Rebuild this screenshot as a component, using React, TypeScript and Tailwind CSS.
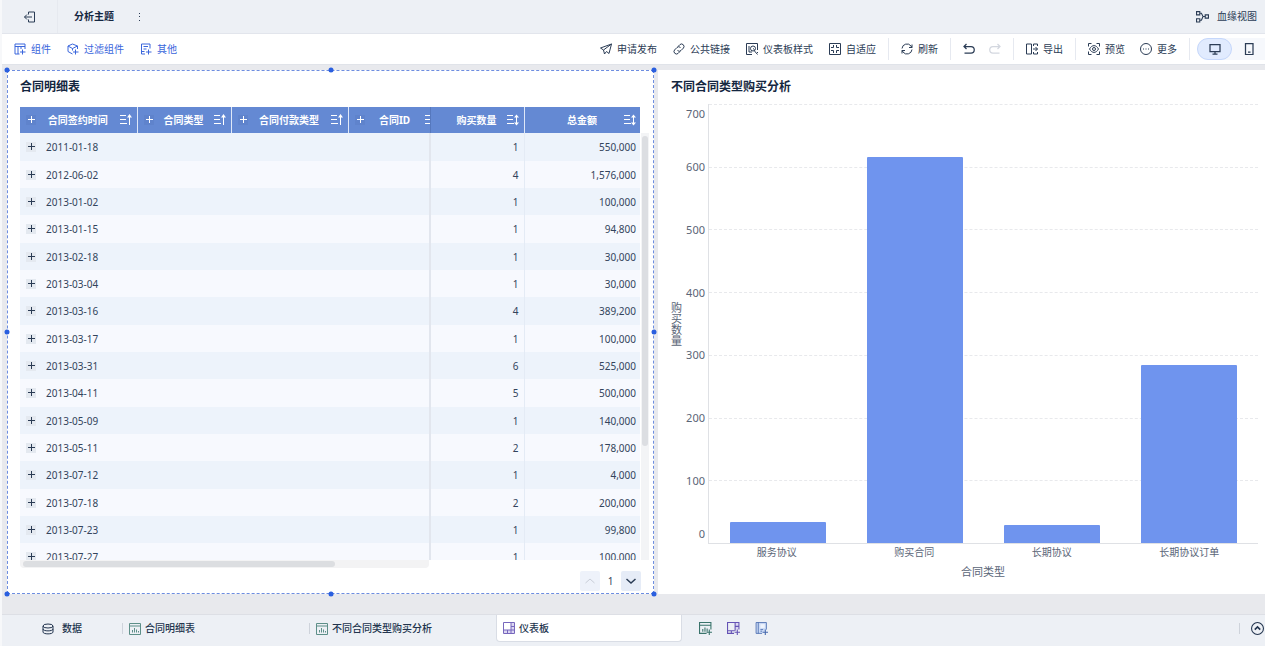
import React from 'react';
import clsx from 'clsx';

interface IconProps {
	children: React.ReactNode;
	size?: string;
}

const Icon: React.FC<IconProps> = ({ children, size = 'w-3 h-3' }) => (
	<svg
		viewBox="0 0 24 24"
		fill="none"
		stroke="currentColor"
		strokeWidth="2"
		className={clsx('shrink-0', size)}
		aria-hidden="true"
	>
		{children}
	</svg>
);

const icons = {
	exit: (
		<>
			<path d="M9 7V2h12v20H9v-5" />
			<path d="M16 12H1M6 7l-5 5 5 5" />
		</>
	),
	component: (
		<>
			<path d="M11 22H2V2h20v10M2 7h20M8 7v15M14 7v5" />
			<path d="M12 18h11M17 13v10" />
		</>
	),
	filter: (
		<>
			<path d="M11 22L2 17V6l9-4 10 4v6M2 6l9 5 10-5M11 11v4" />
			<path d="M12 18h11M17 13v10" />
		</>
	),
	other: (
		<>
			<path d="M10 22H3V2h17v9M7 7h9M7 12h6M3 17h6" />
			<path d="M12 18h11M17 13v10" />
		</>
	),
	publish: <path d="M23 2L1 10l6 4 2 8 4-5 5 4zM23 2L7 14" />,
	link: (
		<>
			<path d="M10 7l4-4a5 5 0 0 1 7 7l-5 5a5 5 0 0 1-7 0" />
			<path d="M14 17l-4 4a5 5 0 0 1-7-7l5-5a5 5 0 0 1 7 0" />
		</>
	),
	style: (
		<>
			<path d="M12 23H1V1h22v13M6 6v12M6 18h6" />
			<circle cx="14" cy="11" r="5" />
			<path d="M14 11l3 2M17 16l6 7M23 18v2" />
		</>
	),
	fit: (
		<>
			<path d="M1 1h22v22H1z" />
			<path d="M9 4v5H4M15 4v5h5M9 20v-5H4M15 20v-5h5" />
		</>
	),
	refresh: (
		<>
			<path d="M2 11a10 10 0 0 1 18-5l2 3M22 3v6h-6" />
			<path d="M22 13a10 10 0 0 1-18 5l-2-3M2 21v-6h6" />
		</>
	),
	undo: <path strokeWidth="2.5" d="M7 2L2 7l5 5M2 7h14a6 6 0 0 1 0 13H3" />,
	redo: <path strokeWidth="2.5" d="M17 2l5 5-5 5M22 7H8a6 6 0 0 0 0 13h13" />,
	export: (
		<>
			<path d="M1 2h10v20H1zM15 6V2h8v4M15 18v4h8v-4" />
			<path d="M14 12h9M19 8l4 4-4 4" />
		</>
	),
	preview: (
		<>
			<path d="M1 7V1h6M17 1h6v6M23 17v6h-6M7 23H1v-6" />
			<path d="M3 12c5-9 13-9 18 0-5 9-13 9-18 0z" />
			<circle cx="12" cy="12" r="3" />
		</>
	),
	more: (
		<>
			<circle cx="12" cy="12" r="11" />
			<path d="M6 12h2M11 12h2M16 12h2" />
		</>
	),
	desktop: <path strokeWidth="2.5" d="M2 3h20v14H2zM12 17v5M7 22h10" />,
	phone: <path strokeWidth="2.5" d="M5 1h15v22H5zM10 18h5" />,
	lineage: (
		<>
			<path d="M1 3h6v6H1zM1 16h6v6H1zM17 9h6v6h-6z" />
			<path d="M7 6h3l3 6-3 7H7M13 12h4" />
		</>
	),
	database: (
		<>
			<ellipse cx="12" cy="6" rx="10" ry="4" />
			<path d="M2 6v12c0 5 20 5 20 0V6M2 12c0 5 20 5 20 0" />
		</>
	),
	chart: (
		<>
			<path d="M1 1h22v22H1zM1 6h22" />
			<path d="M7 19v-5M11 19v-9M15 19v-6M19 19v-3" />
		</>
	),
	board: (
		<>
			<path fill="#dcd7f2" stroke="none" d="M16 2h6v20H2v-6h14z" />
			<path d="M1 1h22v22H1zM16 1v22M1 16h22M16 9h7M9 16v7" />
		</>
	),
	addChart: (
		<>
			<path d="M14 21H1V1h21v13M1 6h21M7 18v-5M11 18v-8M15 18v-6" />
			<path d="M14 19h10M19 14v10" />
		</>
	),
	addBoard: (
		<>
			<path fill="#dcd7f2" stroke="none" d="M15 2h6v12h-6z" />
			<path d="M13 21H1V1h21v13M15 1v15M1 16h13M15 8h7M8 16v5" />
			<path d="M14 19h10M19 14v10" />
		</>
	),
	addReport: (
		<>
			<path fill="#cddcf6" strokeWidth="1.5" d="M13 21H2V1h19v13" />
			<path strokeWidth="1.5" d="M6 1v20M10 14h5M10 17h3" />
			<path fill="#eef3fc" stroke="none" d="M10 4h8v7h-8z" />
			<path d="M14 19h10M19 14v10" />
		</>
	),
};

const leftTools = [
	{ label: '组件', icon: icons.component },
	{ label: '过滤组件', icon: icons.filter },
	{ label: '其他', icon: icons.other },
];

const centerTools = [
	{ label: '申请发布', icon: icons.publish },
	{ label: '公共链接', icon: icons.link },
	{ label: '仪表板样式', icon: icons.style },
	{ label: '自适应', icon: icons.fit },
];

const columns = [
	{ name: '合同签约时间', dimension: true },
	{ name: '合同类型', dimension: true },
	{ name: '合同付款类型', dimension: true },
	{ name: '合同ID', dimension: true },
	{ name: '购买数量', dimension: false },
	{ name: '总金额', dimension: false },
];

const rows = [
	['2011-01-18', '1', '550,000'],
	['2012-06-02', '4', '1,576,000'],
	['2013-01-02', '1', '100,000'],
	['2013-01-15', '1', '94,800'],
	['2013-02-18', '1', '30,000'],
	['2013-03-04', '1', '30,000'],
	['2013-03-16', '4', '389,200'],
	['2013-03-17', '1', '100,000'],
	['2013-03-31', '6', '525,000'],
	['2013-04-11', '5', '500,000'],
	['2013-05-09', '1', '140,000'],
	['2013-05-11', '2', '178,000'],
	['2013-07-12', '1', '4,000'],
	['2013-07-18', '2', '200,000'],
	['2013-07-23', '1', '99,800'],
	['2013-07-27', '1', '100,000'],
];

const ticks = [700, 600, 500, 400, 300, 200, 100, 0];

const bars = [
	{ name: '服务协议', value: 34 },
	{ name: '购买合同', value: 616 },
	{ name: '长期协议', value: 28 },
	{ name: '长期协议订单', value: 284 },
];

interface ToolButtonProps {
	icon: React.ReactNode;
	label: string;
}

const ToolButton: React.FC<ToolButtonProps> = ({ icon, label }) => (
	<button className="flex items-center gap-[5px] whitespace-nowrap cursor-pointer">
		<Icon>{icon}</Icon>
		{label}
	</button>
);

const Divider = () => <div className="w-px h-[22px] bg-[#e6e9f0]" />;

const Plus = ({ light = false }: { light?: boolean }) => (
	<button
		aria-label="展开"
		className={clsx(
			'shrink-0 w-[10px] h-[10px] flex items-center justify-center',
			light ? 'bg-[#5f83cc] text-white' : 'bg-[#e4e9f0] text-[#2b3c55]'
		)}
	>
		<svg viewBox="0 0 10 10" className="w-[10px] h-[10px]" stroke="currentColor">
			<path d="M2 4.5h7M5.5 1v7" />
		</svg>
	</button>
);

const SortIcon = ({ both = false }: { both?: boolean }) => (
	<button aria-label="排序" className="shrink-0 w-3 h-3">
		<svg viewBox="0 0 12 12" className="w-3 h-3" stroke="currentColor" fill="none">
			<path d="M0 1.5h6M0 5.5h6M0 9.5h7" />
			{both ? (
				<>
					<path d="M9.5 1v10" />
					<path d="M7 3.5h5L9.5 0.5zM7 8.5h5L9.5 11.5z" fill="currentColor" stroke="none" />
				</>
			) : (
				<>
					<path d="M9.5 1v10" />
					<path d="M7 3.5h5L9.5 0z" fill="currentColor" stroke="none" />
				</>
			)}
		</svg>
	</button>
);

const TopBar = () => (
	<header className="h-[34px] shrink-0 flex items-center bg-[#edf0f5] border-b border-[#e2e5ec] text-[#2b3c55]">
		<button
			aria-label="退出"
			className="w-[56px] h-full flex items-center justify-center border-r border-[#e6e9ef]"
		>
			<Icon>{icons.exit}</Icon>
		</button>
		<h1 className="ml-4 text-[10px] font-bold text-[#142640]">分析主题</h1>
		<button aria-label="菜单" className="ml-5 w-3 h-3">
			<svg viewBox="0 0 12 12" className="w-3 h-3" fill="currentColor">
				<path d="M5 2h1v1H5zM5 5h1v1H5zM5 9h1v1H5z" />
			</svg>
		</button>
		<button className="ml-auto mr-2 flex items-center gap-2 text-[10px]">
			<Icon size="w-[13px] h-[13px]">{icons.lineage}</Icon>
			血缘视图
		</button>
	</header>
);

const Toolbar = () => (
	<nav className="h-[31px] shrink-0 flex items-center justify-between pl-3 bg-white border-b border-[#e0e3e9] text-[10px] text-[#2b3c55]">
		<div className="flex items-center gap-4 text-[#3a66dc]">
			{leftTools.map((tool) => (
				<ToolButton key={tool.label} {...tool} />
			))}
		</div>
		<div className="flex items-center gap-3">
			<div className="flex items-center gap-4">
				{centerTools.map((tool) => (
					<ToolButton key={tool.label} {...tool} />
				))}
			</div>
			<Divider />
			<ToolButton icon={icons.refresh} label="刷新" />
			<Divider />
			<button aria-label="撤销">
				<Icon>{icons.undo}</Icon>
			</button>
			<button aria-label="重做" disabled className="ml-[2px] text-[#d3d7df]">
				<Icon>{icons.redo}</Icon>
			</button>
			<Divider />
			<ToolButton icon={icons.export} label="导出" />
			<Divider />
			<div className="flex items-center gap-[15px]">
				<ToolButton icon={icons.preview} label="预览" />
				<ToolButton icon={icons.more} label="更多" />
			</div>
			<div className="flex items-center gap-[7px]">
				<Divider />
				<div className="flex items-center w-[68px] h-[22px] rounded-l-full bg-[#f6f8fc]">
					<button
						aria-label="电脑端"
						className="w-[35px] h-[22px] flex items-center justify-center rounded-full bg-[#e1ebfe] border border-[#c5d7fb]"
					>
						<Icon>{icons.desktop}</Icon>
					</button>
					<button aria-label="移动端" className="flex-1 flex items-center justify-center">
						<Icon>{icons.phone}</Icon>
					</button>
				</div>
			</div>
		</div>
	</nav>
);

const Handle = ({ className }: { className: string }) => (
	<span
		className={clsx(
			'absolute w-[5px] h-[5px] rounded-full bg-[#2a5fdf] -translate-x-1/2 -translate-y-1/2',
			className
		)}
	/>
);

const DetailTable = () => (
	<section className="relative min-w-0 min-h-0 flex flex-col bg-white outline-1 -outline-offset-1 outline-dashed outline-[#6d8de0] pl-[13px] pr-[5px]">
		<h2 className="mt-[9px] h-4 leading-4 text-[12px] font-bold text-[#142640]">合同明细表</h2>
		<div className="mt-3 flex-1 min-h-0 flex">
			<div className="flex-1 min-w-0 overflow-hidden">
				<table className="w-full table-fixed border-collapse text-[10px] leading-3">
					<colgroup>
						<col className="w-[117px]" />
						<col className="w-[94px]" />
						<col className="w-[117px]" />
						<col className="w-[82px]" />
						<col className="w-[94px]" />
						<col className="w-[117px]" />
					</colgroup>
					<thead>
						<tr className="h-[26px] bg-[#6489d3] text-white">
							{columns.map((col, i) => (
								<th
									key={col.name}
									scope="col"
									className={clsx(
										'p-0 font-bold overflow-hidden border-r',
										i === 3 ? 'border-[#5678bd]' : 'border-[#dfe8f8]'
									)}
								>
									<div
										className={clsx(
											'flex items-center whitespace-nowrap',
											col.dimension ? 'pl-[6px]' : 'pl-4',
											i === 3 ? 'gap-[7px]' : 'pr-[5px]'
										)}
									>
										{col.dimension && <Plus light />}
										<span className={clsx('text-center', i === 3 ? 'shrink-0 w-[46px]' : 'flex-1')}>
											{col.name}
										</span>
										<SortIcon both={!col.dimension} />
									</div>
								</th>
							))}
						</tr>
					</thead>
					<tbody className="text-[#33445c]">
						{rows.map(([date, count, amount]) => (
							<tr
								key={date}
								className="h-[27px] nth-[3n+1]:h-[28px] odd:bg-[#edf3fb] even:bg-[#f7f9fe]"
							>
								<td className="p-0">
									<div className="flex items-center gap-[10px] pl-[6px]">
										<Plus />
										{date}
									</div>
								</td>
								<td />
								<td />
								<td className="border-r-2 border-[#e2e6ee]" />
								<td className="p-0 pr-[5px] text-right border-r border-[#e4ebf5]">{count}</td>
								<td className="p-0 pr-[5px] text-right">{amount}</td>
							</tr>
						))}
					</tbody>
				</table>
			</div>
			<div className="w-2 mt-[26px] ml-px pt-[3px] px-px bg-[#f3f4f6]">
				<div className="h-[73%] rounded-full bg-[#dcdee2]" />
			</div>
		</div>
		<div className="h-2 w-[65%] p-px pl-[3px] rounded-b-sm bg-[#f3f3f4]">
			<div className="w-[77%] h-full rounded-full bg-[#dcdee1]" />
		</div>
		<div className="mt-[3px] mb-[3px] mr-2 flex items-center justify-end text-[10px] text-[#33445c]">
			<button
				aria-label="上一页"
				disabled
				className="w-5 h-5 flex items-center justify-center rounded-xs bg-[#eef2fa] text-[#c9ced8]"
			>
				<Icon>
					<path d="M3 16l9-8 9 8" />
				</Icon>
			</button>
			<span className="w-[21px] text-center">1</span>
			<button
				aria-label="下一页"
				className="w-5 h-5 flex items-center justify-center rounded-xs bg-[#e6ecf7] text-[#2b3c55]"
			>
				<Icon>
					<path strokeWidth="3" d="M3 8l9 8 9-8" />
				</Icon>
			</button>
		</div>

		<Handle className="left-0 top-0" />
		<Handle className="left-1/2 top-0" />
		<Handle className="left-full top-0" />
		<Handle className="left-0 top-1/2" />
		<Handle className="left-full top-1/2" />
		<Handle className="left-0 top-full" />
		<Handle className="left-1/2 top-full" />
		<Handle className="left-full top-full" />
	</section>
);

const BarChart = () => (
	<section className="min-w-0 min-h-0 flex flex-col bg-white pl-[13px] pr-[7px] text-[#5a6577]">
		<h2 className="mt-[9px] h-4 leading-4 text-[12px] font-bold text-[#142640]">
			不同合同类型购买分析
		</h2>
		<div className="mt-[9px] flex-1 min-h-0 flex">
			<div className="w-[11px] self-center text-[11px] leading-[11px] break-all">购买数量</div>
			<div className="w-[26px] pr-[3px] flex flex-col text-[11px] leading-5 text-right">
				{ticks.map((tick, i) => (
					<div
						key={tick}
						className={clsx(
							'flex justify-end',
							i === 0 && 'flex-[1_1_0%] items-start',
							i > 0 && i < 7 && 'flex-[2_2_0%] items-center',
							i === 7 && 'flex-[1_1_0%] items-end'
						)}
					>
						{tick}
					</div>
				))}
			</div>
			<div className="flex-1 grid border-l border-b border-[#dfe1e5]">
				<div className="col-start-1 row-start-1 flex flex-col">
					{ticks.slice(0, -1).map((tick) => (
						<div key={tick} className="flex-1 border-t border-dashed border-[#e8e9ec]" />
					))}
				</div>
				<div className="col-start-1 row-start-1 flex items-end">
					{bars.map((bar) => (
						<div key={bar.name} className="flex-1 h-full flex items-end justify-center">
							<div
								className="w-[70%] rounded-t-[1px] bg-[#6f94ee]"
								style={{ height: `${(bar.value / 700) * 100}%` }}
							/>
						</div>
					))}
				</div>
			</div>
		</div>
		<div className="pl-[37px] flex text-[10px] leading-4">
			{bars.map((bar) => (
				<span key={bar.name} className="flex-1 text-center">
					{bar.name}
				</span>
			))}
		</div>
		<div className="pl-[37px] mt-1 mb-[14px] text-center text-[11px] leading-4">合同类型</div>
	</section>
);

const sheetTab = 'w-[186px] shrink-0 flex items-center gap-1 pl-[6px]';

const TabDivider = () => <div className="w-px h-[11px] bg-[#ced3db]" />;

const SheetBar = () => (
	<footer className="h-8 shrink-0 flex items-center pb-1 bg-[#edf0f5] border-t border-[#dddfe5] text-[10px] font-medium text-[#22344e]">
		<button className="w-[120px] h-full flex items-center justify-center gap-2">
			<Icon>{icons.database}</Icon>
			数据
		</button>
		<TabDivider />
		<button className={sheetTab}>
			<span className="text-[#5d8f88]">
				<Icon>{icons.chart}</Icon>
			</span>
			合同明细表
		</button>
		<TabDivider />
		<button className={sheetTab}>
			<span className="text-[#5d8f88]">
				<Icon>{icons.chart}</Icon>
			</span>
			不同合同类型购买分析
		</button>
		<button
			className={clsx(
				sheetTab,
				'h-full rounded-b-[4px] bg-white border-b border-x border-[#d9dde5]'
			)}
		>
			<span className="text-[#7767bd]">
				<Icon>{icons.board}</Icon>
			</span>
			仪表板
		</button>
		<div className="ml-[17px] flex items-center gap-[15px]">
			<button aria-label="添加组件" className="text-[#39736b]">
				<Icon size="w-[13px] h-[13px]">{icons.addChart}</Icon>
			</button>
			<button aria-label="添加仪表板" className="text-[#6553b5]">
				<Icon size="w-[13px] h-[13px]">{icons.addBoard}</Icon>
			</button>
			<button aria-label="添加报告" className="text-[#4467ad]">
				<Icon size="w-[13px] h-[13px]">{icons.addReport}</Icon>
			</button>
		</div>
		<div className="ml-auto flex items-center gap-[11px]">
			<TabDivider />
			<button aria-label="展开面板" className="mr-px">
				<Icon size="w-[13px] h-[13px]">
					<circle cx="12" cy="12" r="11" />
					<path strokeWidth="3" d="M7 14l5-5 5 5" />
				</Icon>
			</button>
		</div>
	</footer>
);

const App = () => (
	<div
		lang="zh-CN"
		className="h-screen min-h-[480px] flex flex-col overflow-hidden pl-[2px] bg-[#f7f8fa] font-['Noto_Sans','Noto_Sans_CJK_SC',sans-serif]"
	>
		<TopBar />
		<Toolbar />
		<main className="flex-1 min-h-0 grid grid-cols-[647fr_607fr] grid-rows-[minmax(0,1fr)] gap-1 pt-[5px] pb-5 pl-[5px] bg-[#e8e9ed]">
			<DetailTable />
			<BarChart />
		</main>
		<SheetBar />
	</div>
);

export default App;
